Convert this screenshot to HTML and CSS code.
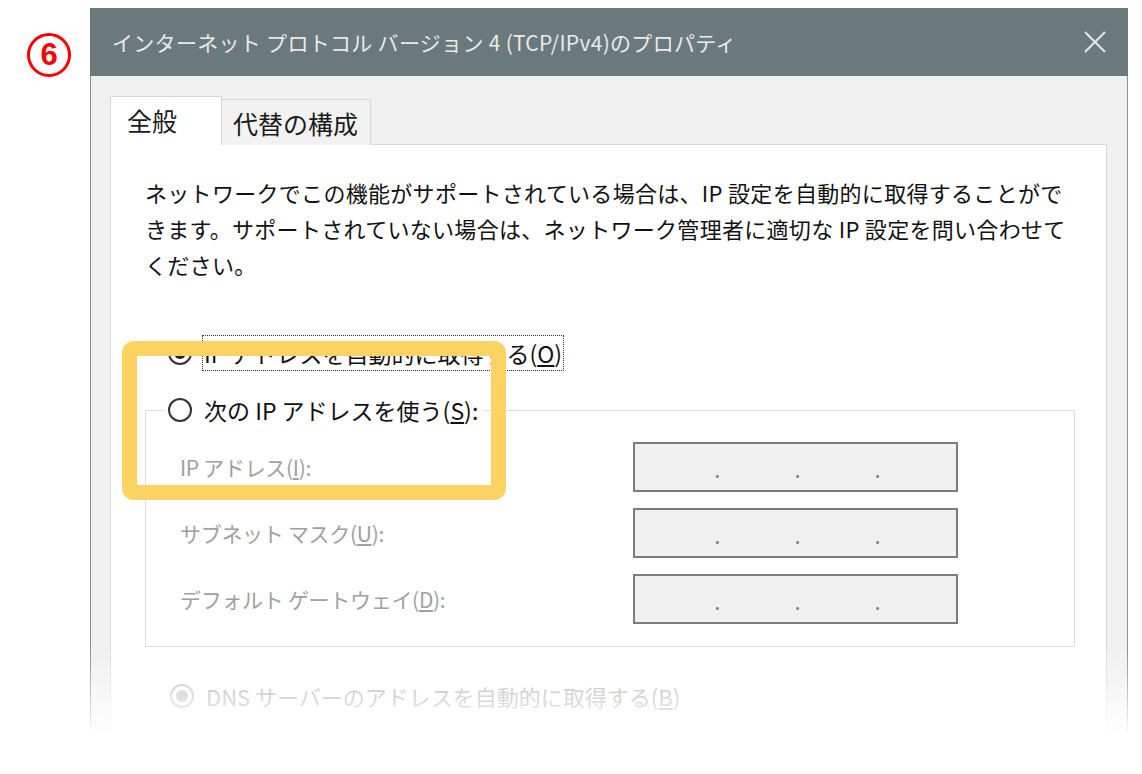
FILE: index.html
```html
<!DOCTYPE html>
<html>
<head>
  <meta charset="utf-8">
  <title>インターネット プロトコル バージョン 4 (TCP/IPv4)のプロパティ</title>
  <link rel="stylesheet" href="styles.css">
</head>
<body>
  <div class="page">
    <div class="marker">6</div>

    <div class="window">
      <div class="titlebar">
        <span class="title">インターネット プロトコル バージョン 4 (TCP/IPv4)のプロパティ</span>
        <svg class="close" width="22" height="22" viewBox="0 0 22 22">
          <path d="M1 1 L21 21 M21 1 L1 21" stroke="#e4e6e6" stroke-width="2" fill="none"/>
        </svg>
      </div>

      <div class="body">
        <div class="tabs">
          <div class="tab active">全般</div>
          <div class="tab">代替の構成</div>
        </div>

        <div class="panel">
          <p class="intro">ネットワークでこの機能がサポートされている場合は、IP 設定を自動的に取得することがで<br>きます。サポートされていない場合は、ネットワーク管理者に適切な IP 設定を問い合わせて<br>ください。</p>

          <div class="option first">
            <span class="radio checked"></span>
            <span class="label focus">IP アドレスを自動的に取得する(<u>O</u>)</span>
          </div>

          <fieldset class="group">
            <legend>
              <span class="option">
                <span class="radio"></span>
                <span class="label">次の IP アドレスを使う(<u>S</u>):</span>
              </span>
            </legend>

            <div class="field-row">
              <span class="field-label">IP アドレス(<u>I</u>):</span>
              <div class="ip-box"><span>.</span><span>.</span><span>.</span></div>
            </div>
            <div class="field-row">
              <span class="field-label">サブネット マスク(<u>U</u>):</span>
              <div class="ip-box"><span>.</span><span>.</span><span>.</span></div>
            </div>
            <div class="field-row">
              <span class="field-label">デフォルト ゲートウェイ(<u>D</u>):</span>
              <div class="ip-box"><span>.</span><span>.</span><span>.</span></div>
            </div>
          </fieldset>

          <div class="option disabled">
            <span class="radio checked"></span>
            <span class="label">DNS サーバーのアドレスを自動的に取得する(<u>B</u>)</span>
          </div>
        </div>
      </div>
    </div>

    <div class="highlight"></div>
    <div class="fade"></div>
  </div>
</body>
</html>
```

FILE: styles.css
```css
body {
  margin: 0;
  background: #fff;
  font-family: "Noto Sans CJK JP", "Noto Sans", sans-serif;
  overflow: hidden;
}
.page {
  position: relative;
  display: flex;
  align-items: flex-start;
  height: 774px;
  padding: 8px 0 0 27px;
  box-sizing: border-box;
  overflow: hidden;
}
.marker {
  width: 44px;
  height: 44px;
  margin: 25px 19px 0 0;
  box-sizing: border-box;
  border: 3px solid #f00;
  border-radius: 50%;
  color: #f00;
  font: bold 31px/38px "Liberation Sans", sans-serif;
  text-align: center;
}

/* window */
.window {
  width: 1038px;
  background: #f0f0f0;
}
.titlebar {
  display: flex;
  align-items: center;
  justify-content: space-between;
  height: 68px;
  padding: 0 22px 0 22px;
  background: #6b797d;
}
.title {
  color: #e8eaea;
  font-size: 21px;
  letter-spacing: 0.3px;
}
.body {
  padding: 20px 20px 0 19px;
  border-left: 1px solid #8a8f90;
  border-right: 1px solid #8a8f90;
}

/* tabs */
.tabs {
  display: flex;
  align-items: flex-end;
  height: 49px;
  margin-bottom: -1px;
}
.tab {
  position: relative;
  display: flex;
  align-items: center;
  box-sizing: border-box;
  height: 46px;
  padding-left: 11px;
  width: 149px;
  border: 1px solid #d9d9d9;
  border-bottom: none;
  border-left: none;
  background: #f2f2f2;
  font-size: 25px;
  color: #1a1a1a;
}
.tab.active {
  width: 112px;
  height: 49px;
  padding-left: 16px;
  padding-bottom: 2px;
  border-left: 1px solid #d9d9d9;
  background: #fff;
}

/* panel */
.panel {
  height: 599px;
  padding: 29px 34px 0 34px;
  border: 1px solid #d9d9d9;
  background: #fff;
}
.intro {
  margin: 0;
  font-size: 22px;
  line-height: 36px;
  letter-spacing: 0.3px;
  color: #111;
}

.option {
  display: flex;
  align-items: center;
  gap: 10px;
  height: 36px;
  font-size: 23px;
  color: #111;
}
.option.first {
  margin: 53px 0 0 23px;
}
.label {
  padding: 0 2px;
  line-height: 36px;
  white-space: nowrap;
}
.label.focus {
  outline: 1px dotted #333;
  outline-offset: -1px;
}
.radio {
  display: flex;
  align-items: center;
  justify-content: center;
  flex-shrink: 0;
  width: 24px;
  height: 24px;
  box-sizing: border-box;
  border: 2px solid #333;
  border-radius: 50%;
  background: #fff;
}
.radio.checked::after {
  content: "";
  width: 12px;
  height: 12px;
  border-radius: 50%;
  background: #222;
}
.option.disabled {
  margin: 31px 0 0 25px;
  font-size: 22px;
  color: #a8a8a8;
}
.option.disabled .radio {
  border-color: #bcbcbc;
}
.option.disabled .radio::after {
  background: #bcbcbc;
}

/* group box */
.group {
  width: 930px;
  box-sizing: border-box;
  margin: 21px 0 0 0;
  padding: 14px 0 22px 0;
  border: 1px solid #dcdcdc;
  display: flex;
  flex-direction: column;
  gap: 16px;
}
.group legend {
  margin-left: 19px;
  padding: 0 3px;
}
.field-row {
  display: grid;
  grid-template-columns: 453px 325px;
  align-items: center;
  padding-left: 34px;
}
.field-label {
  font-size: 21px;
  letter-spacing: -0.3px;
  color: #a0a0a0;
  white-space: nowrap;
}
.ip-box {
  display: flex;
  justify-content: center;
  gap: 74px;
  height: 50px;
  box-sizing: border-box;
  padding: 4px 0 0 4px;
  border: 2px solid #7c7c7c;
  background: #f0f0f0;
  color: #808080;
  font-size: 22px;
  line-height: 40px;
}

/* annotation overlays */
.highlight {
  position: absolute;
  left: 122px;
  top: 341px;
  width: 384px;
  height: 159px;
  box-sizing: border-box;
  border: 15px solid #fcd262;
  border-radius: 12px;
}
.fade {
  position: absolute;
  left: 0;
  right: 0;
  top: 650px;
  height: 124px;
  background: linear-gradient(rgba(255,255,255,0), #fff 70%);
}
```
